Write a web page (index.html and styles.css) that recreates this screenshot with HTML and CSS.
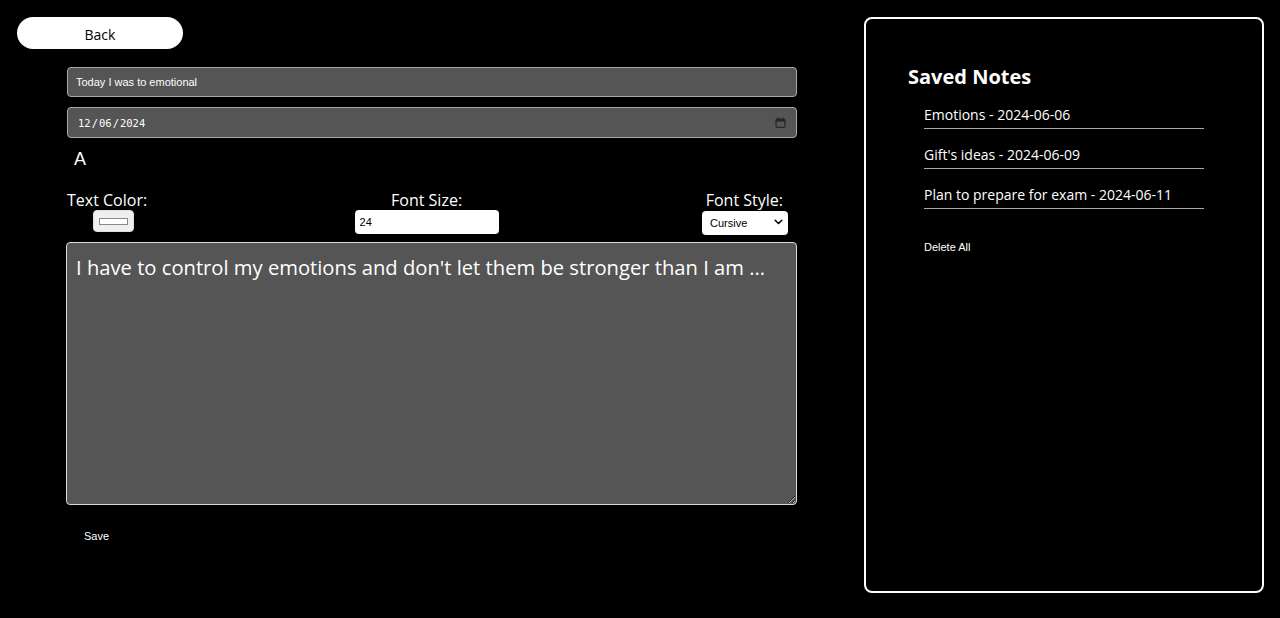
FILE: index.html
```html
<!DOCTYPE html>
<html lang="en">
<head>
<meta charset="utf-8">
<title>Notes</title>
<link rel="stylesheet" href="styles.css">
</head>
<body>
<div class="page">
  <div class="left">
    <button class="back">Back</button>
    <div class="form">
      <input class="field title" type="text" value="Today I was to emotional">
      <span class="date-wrap">
        <input class="field date" type="date" value="2024-12-06">
        <svg class="cal" width="11" height="11" viewBox="0 0 11 11"><path d="M3 0.5 V2.5 M8 0.5 V2.5" stroke="#262626" stroke-width="1.2"/><rect x="1" y="2" width="9" height="8.3" rx="1.3" fill="none" stroke="#262626" stroke-width="1.2"/><rect x="1" y="2" width="9" height="2.6" fill="#262626"/></svg>
      </span>
      <div class="letter">A</div>
      <div class="controls">
        <div class="ctrl ctrl-color">
          <label>Text Color:</label>
          <input class="color" type="color" value="#ffffff">
        </div>
        <div class="ctrl ctrl-size">
          <label>Font Size:</label>
          <input class="size" type="number" value="24">
        </div>
        <div class="ctrl ctrl-style">
          <label>Font Style:</label>
          <span class="select-wrap">
            <select class="style">
              <option>Cursive</option>
              <option>Serif</option>
              <option>Sans-serif</option>
            </select>
            <svg class="chevron" width="9" height="6" viewBox="0 0 9 6"><path d="M1.2 1.2 L4.5 4.5 L7.8 1.2" fill="none" stroke="#000" stroke-width="1.5" stroke-linecap="round" stroke-linejoin="round"/></svg>
          </span>
        </div>
      </div>
      <textarea class="content">I have to control my emotions and don't let them be stronger than I am ...</textarea>
      <button class="save">Save</button>
    </div>
  </div>
  <aside class="panel">
    <h2 class="panel-title">Saved Notes</h2>
    <ul class="notes">
      <li>Emotions - 2024-06-06</li>
      <li>Gift's ideas - 2024-06-09</li>
      <li>Plan to prepare for exam - 2024-06-11</li>
    </ul>
    <button class="delete">Delete All</button>
  </aside>
</div>
</body>
</html>
```
FILE: styles.css
```css
* { box-sizing: border-box; }
html, body { margin: 0; background: #000; }
body {
  font-family: "Open Sans", "Noto Sans", sans-serif;
  color: #fff;
  height: 618px;
  overflow: hidden;
}
.page {
  display: flex;
  padding: 17px 16px 0 17px;
}
.left {
  width: 847px;
  display: flex;
  flex-direction: column;
}
.back {
  width: 166px;
  height: 32px;
  border: none;
  border-radius: 16px;
  background: #fff;
  color: #000;
  font-family: "Open Sans", sans-serif;
  font-size: 14px;
  padding: 2px 0 0;
}
.form {
  margin-left: 50px;
  width: 730px;
  display: flex;
  flex-direction: column;
  margin-top: 18px;
}
.field {
  width: 730px;
  background: #555;
  border: 1px solid #a9a9a9;
  border-radius: 4px;
  color: #fff;
  padding: 0 8px;
}
.title {
  height: 30px;
  font-family: "Liberation Sans", Arial, sans-serif;
  font-size: 11px;
}
.date-wrap {
  position: relative;
  display: block;
  margin-top: 10px;
  height: 31px;
}
.date {
  display: block;
  height: 31px;
  font-family: "DejaVu Sans Mono", monospace;
  font-size: 10.5px;
  padding-left: 9px;
  padding-right: 10px;
}
.date::-webkit-calendar-picker-indicator { opacity: 0; }
.cal {
  position: absolute;
  right: 11px;
  top: 10px;
  pointer-events: none;
}
.letter {
  font-family: "Liberation Sans", Arial, sans-serif;
  font-size: 18px;
  margin-left: 7px;
  margin-top: 10px;
  line-height: 22px;
  height: 22px;
}
.controls {
  display: flex;
  justify-content: space-between;
  margin-top: 20px;
}
.ctrl {
  display: flex;
  flex-direction: column;
}
.ctrl label {
  font-size: 16px;
  line-height: 18px;
  height: 20px;
  padding-top: 1px;
}
.ctrl-color { align-items: flex-start; }
.ctrl-size { align-items: center; margin-left: 4px; }
.ctrl-style { align-items: flex-end; margin-right: 9px; }
.ctrl-style label { margin-right: 5px; }
.color {
  margin: 0 0 0 26px;
  width: 41px;
  height: 22px;
  padding: 7px 5px 6px;
  border: 1px solid #e0e0e0;
  border-radius: 4px;
  background: #efefef;
}
.color::-webkit-color-swatch-wrapper { padding: 0; }
.color::-webkit-color-swatch { border: 1px solid #8a8a8a; }
.size {
  width: 144px;
  height: 24px;
  border: none;
  border-radius: 4px;
  background: #fff;
  font-family: "Liberation Sans", Arial, sans-serif;
  font-size: 11px;
  padding: 0 5px;
}
.size::-webkit-inner-spin-button { display: none; }
.select-wrap {
  position: relative;
  display: block;
  width: 86px;
  height: 24px;
}
.style {
  appearance: none;
  -webkit-appearance: none;
  width: 86px;
  height: 24px;
  border: none;
  border-radius: 4px;
  background: #fff;
  color: #000;
  font-family: "Liberation Sans", Arial, sans-serif;
  font-size: 11px;
  padding-left: 8px;
}
.chevron {
  position: absolute;
  right: 5px;
  top: 9px;
  pointer-events: none;
}
.content {
  margin-top: 8px;
  margin-left: -1px;
  width: 731px;
  height: 263px;
  background: #555;
  border: 1px solid #d9d9d9;
  border-radius: 4px;
  color: #fff;
  font-family: "Open Sans", sans-serif;
  font-size: 20.2px;
  padding: 10px 9px;
  resize: vertical;
}
.save {
  align-self: flex-start;
  margin-top: 23px;
  margin-left: 11px;
  background: transparent;
  border: none;
  color: #fff;
  font-family: "Liberation Sans", Arial, sans-serif;
  font-size: 11px;
  padding: 2px 6px;
}
.panel {
  width: 400px;
  height: 576px;
  border: 2px solid #fff;
  border-radius: 8px;
  padding: 44px 58px 0 42px;
}
.panel-title {
  margin: 0;
  font-size: 20px;
  font-weight: 700;
  line-height: 28px;
}
.notes {
  list-style: none;
  margin: 15px 0 0 16px;
  padding: 0;
}
.notes li {
  font-size: 14px;
  line-height: 18px;
  padding-bottom: 4px;
  border-bottom: 1px solid #aaa;
  margin-bottom: 17px;
}
.delete {
  margin-top: 13px;
  margin-left: 10px;
  background: transparent;
  border: none;
  color: #fff;
  font-family: "Liberation Sans", Arial, sans-serif;
  font-size: 11px;
  padding: 2px 6px;
}
```
